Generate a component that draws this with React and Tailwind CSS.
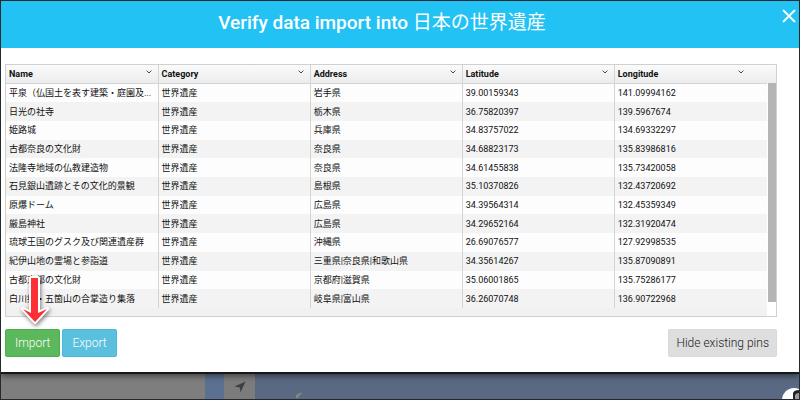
const columns = ["Name", "Category", "Address", "Latitude", "Longitude"];

const rows = [
  ["平泉（仏国土を表す建築・庭園及...", "岩手県", "39.00159343", "141.09994162"],
  ["日光の社寺", "栃木県", "36.75820397", "139.5967674"],
  ["姫路城", "兵庫県", "34.83757022", "134.69332297"],
  ["古都奈良の文化財", "奈良県", "34.68823173", "135.83986816"],
  ["法隆寺地域の仏教建造物", "奈良県", "34.61455838", "135.73420058"],
  ["石見銀山遺跡とその文化的景観", "島根県", "35.10370826", "132.43720692"],
  ["原爆ドーム", "広島県", "34.39564314", "132.45359349"],
  ["厳島神社", "広島県", "34.29652164", "132.31920474"],
  ["琉球王国のグスク及び関連遺産群", "沖縄県", "26.69076577", "127.92998535"],
  ["紀伊山地の霊場と参詣道", "三重県|奈良県|和歌山県", "34.35614267", "135.87090891"],
  ["古都京都の文化財", "京都府|滋賀県", "35.06001865", "135.75286177"],
  ["白川郷・五箇山の合掌造り集落", "岐阜県|富山県", "36.26070748", "136.90722968"],
];

function Caret() {
  return (
    <svg viewBox="0 0 6 4" className="h-1 w-1.5" fill="none" stroke="#444" strokeWidth="1">
      <path d="M0.6 0.6 L3 3 L5.4 0.6" />
    </svg>
  );
}

function DataGrid() {
  return (
    <div className="relative border border-[#d0d0d0] bg-[#f1f1f1] pb-2">
      <table className="h-[243px] w-full table-fixed border-collapse text-[9px] leading-3 text-[#111]">
        <colgroup>
          <col className="w-[19.75%]" />
          <col className="w-[19.75%]" />
          <col className="w-[19.75%]" />
          <col className="w-[19.75%]" />
          <col />
        </colgroup>
        <thead>
          <tr className="h-[18px] bg-linear-to-b from-[#fbfbfb] to-[#ececec]">
            {columns.map((name) => (
              <th key={name} className="border-r border-b border-[#d4d4d4] p-0 pr-1.5 pl-[3px] text-left font-bold last:border-r-0 last:pr-8">
                <div className="flex justify-between">
                  <span>{name}</span>
                  <button type="button" aria-label={`${name} column menu`} className="flex h-2 items-center">
                    <Caret />
                  </button>
                </div>
              </th>
            ))}
          </tr>
        </thead>
        <tbody>
          {rows.map(([name, address, lat, lng]) => (
            <tr key={name} className="odd:bg-[#fdfdfd] even:bg-[#f3f3f3]">
              {[name, "世界遺産", address, lat, lng].map((value, i) => (
                <td key={i} className="border-r border-[#d4d4d4] p-0 pl-[3px] whitespace-nowrap last:border-r-0">
                  {value}
                </td>
              ))}
            </tr>
          ))}
        </tbody>
      </table>
      <div className="absolute top-[18px] right-0 bottom-0 w-[9px] bg-white">
        <div className="ml-px h-[219px] w-2 bg-[#b5b5b5]" />
      </div>
    </div>
  );
}

function Pointer() {
  return (
    <svg viewBox="0 0 34 56" className="absolute bottom-full left-[13px] h-14 w-[34px] overflow-visible drop-shadow-[1px_2px_2px_rgba(0,0,0,0.5)]">
      <path
        d="M13 5 H20 V40 L29 36 L17 49 L5 36 L13 40 Z"
        fill="#fb2f34"
        stroke="#fff"
        strokeWidth="4"
        strokeLinejoin="round"
        paintOrder="stroke"
      />
    </svg>
  );
}

function MapStrip() {
  return (
    <div className="flex flex-1 overflow-hidden bg-[#5a6983]">
      <div className="w-[204px] bg-[#7e7e7e]" />
      <div className="w-[19px] bg-[#5c7092]" />
      <button type="button" aria-label="My location" className="flex w-[31px] items-center justify-center bg-[#7c7c7c]">
        <svg viewBox="0 0 12 12" className="h-3 w-3" fill="#3f3f3f">
          <path d="M11.5 0.5 L6.5 11.5 L5.8 6.5 L0.5 5.5 Z" />
        </svg>
      </button>
      <svg viewBox="0 0 10 8" className="mt-auto ml-10 h-2 w-2.5" fill="#7d8a84">
        <path d="M1 4 L4 2 L8 2 L5 4 L3 7 L1 7 Z" />
      </svg>
      <svg viewBox="0 0 18 12" className="mt-auto ml-auto h-3 w-[18px]">
        <circle cx="13" cy="13" r="12" fill="#fff" />
        <path d="M12 12 V6 Q13 3 18 3 V12 Z" fill="#222" />
        <path d="M14 12 V8 Q15 6 18 6 V12 Z" fill="#999" />
      </svg>
    </div>
  );
}

export default function App() {
  return (
    <div className="flex min-h-screen flex-col overflow-hidden border border-[#26292c] font-[Roboto,'Noto_Sans_CJK_JP',sans-serif]">
      <section role="dialog" aria-labelledby="title" className="relative z-10 border-b-2 border-[#16181b] bg-white shadow-[0_2px_6px_rgba(0,0,0,0.5)]">
        <header className="relative flex h-[47px] items-center justify-center bg-[#22c2f4] pr-9 pb-1.5 text-white">
          <h1 id="title" className="text-[19px] leading-6 font-medium">
            Verify data import into <span className="font-[Noto_Sans_CJK_JP] font-normal">日本の世界遺産</span>
          </h1>
          <button type="button" aria-label="Close" className="absolute top-2 right-[3px]">
            <svg viewBox="0 0 14 14" className="h-3.5 w-3.5" stroke="#fff" strokeWidth="1.8">
              <path d="M1 1 L13 13 M13 1 L1 13" />
            </svg>
          </button>
        </header>
        <div className="pt-4 pr-[22px] pb-[15px] pl-1">
          <DataGrid />
          <div className="relative mt-3 flex gap-0.5 text-[12px] leading-4 font-light">
            <button type="button" className="h-7 rounded-xs border border-[#4cae4c] bg-[#5cb85c] px-[9px] text-white">Import</button>
            <button type="button" className="h-7 rounded-xs border border-[#46b8da] bg-[#5bc0de] px-[9px] text-white">Export</button>
            <button type="button" className="ml-auto h-7 rounded-xs border border-[#d9d9d9] bg-[#dedede] px-[7px] text-[#222]">Hide existing pins</button>
            <Pointer />
          </div>
        </div>
      </section>
      <MapStrip />
    </div>
  );
}
